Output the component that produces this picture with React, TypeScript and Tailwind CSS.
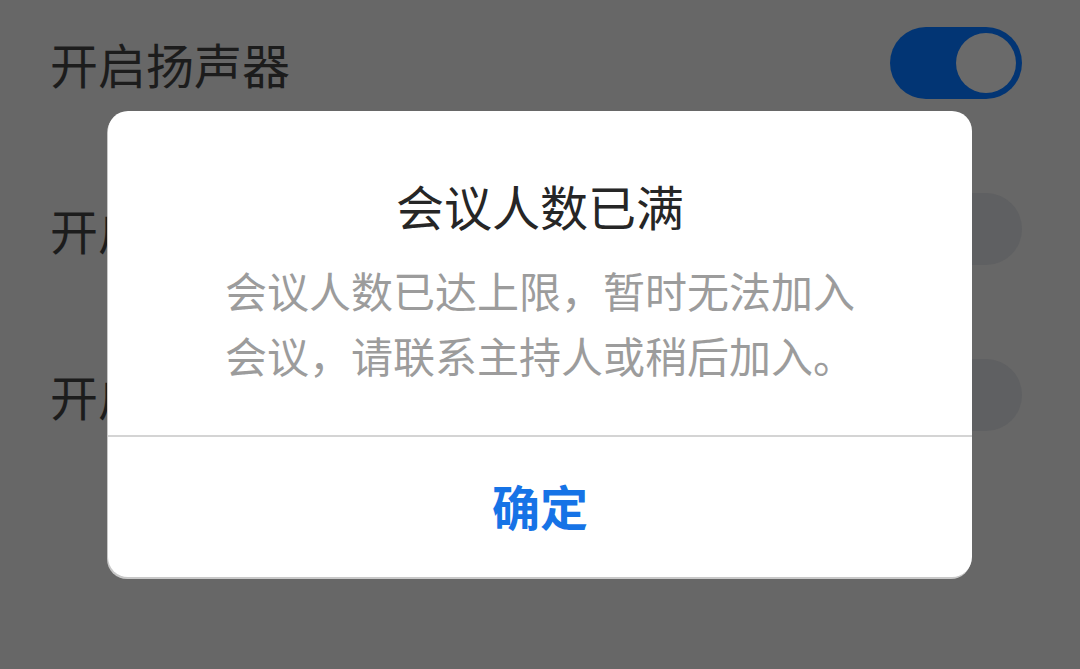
import React from 'react';

const font = { fontFamily: '"Noto Sans CJK SC", "Noto Sans", sans-serif' };

// fondo: filas de ajustes atenuadas detrás del diálogo
const Toggle = ({ on }: { on: boolean }) => (
  <div
    className={`w-[132px] h-[72px] rounded-full flex items-center px-[6px] ${
      on ? 'bg-[#023574] justify-end' : 'bg-[#5f6062] justify-start'
    }`}
  >
    {on && <div className="w-[60px] h-[60px] rounded-full bg-[#6a6a6a]" />}
  </div>
);

const Row = ({ label, on }: { label: string; on: boolean }) => (
  <div className="h-[166px] flex items-center justify-between pl-[50px] pr-[58px]">
    <span className="text-[48px] text-[#1c1c1c] leading-none">{label}</span>
    <Toggle on={on} />
  </div>
);

export default function App() {
  return (
    <div className="w-[1080px] h-[669px] bg-[#676767] relative overflow-hidden" style={font}>
      <div className="-mt-[20px]">
        <Row label="开启扬声器" on />
        <Row label="开启摄像头" on={false} />
        <Row label="开启美颜" on={false} />
      </div>

      <div className="absolute left-[108px] top-[111px] w-[864px] bg-white rounded-[20px] shadow-[-1px_2px_0_#c8c8c8] overflow-hidden">
        <div className="pt-[70px] pb-[48px] flex flex-col items-center">
          <h2 className="text-[48px] leading-none text-[#262626] font-normal">会议人数已满</h2>
          <p className="mt-[28px] w-[632px] text-center text-[42px] leading-[65px] text-[#9c9c9c]">
            会议人数已达上限，暂时无法加入会议，请联系主持人或稍后加入。
          </p>
        </div>
        <div className="h-[2px] bg-[#d4d4d4]" />
        <button className="w-full h-[140px] pb-[4px] flex items-center justify-center text-[48px] font-bold text-[#1673e6]">
          确定
        </button>
      </div>
    </div>
  );
}
